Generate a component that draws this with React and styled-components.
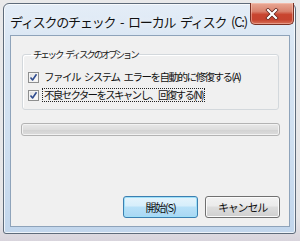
import React from "react";
import styled, { createGlobalStyle } from "styled-components";

const Global = createGlobalStyle`
  html, body { margin: 0; padding: 0; }
  body {
    width: 300px;
    height: 241px;
    overflow: hidden;
    background: linear-gradient(180deg, #e9e9ea 0%, #e6e6e8 90%, #d8d4dc 100%);
    font-family: "Noto Sans CJK JP", "Noto Sans", sans-serif;
  }
`;

const Desk = styled.div`
  padding: 3px 4px 0 3px;
  height: 241px;
  box-sizing: border-box;
`;

const Window = styled.div`
  position: relative;
  width: 293px;
  height: 231px;
  box-sizing: border-box;
  border: 1px solid #5e6b7a;
  border-radius: 6px 6px 3px 3px;
  background: linear-gradient(180deg, #e4edf7 0%, #d8e5f3 20%, #cfdff0 60%, #c2d6ec 100%);
  box-shadow: inset 0 0 0 1px rgba(255, 255, 255, 0.7);
  display: flex;
  flex-direction: column;
`;

const TitleBar = styled.div`
  height: 31px;
  display: flex;
  align-items: center;
  padding: 0 0 0 6px;
`;

const TitleText = styled.span`
  font-size: 13px;
  letter-spacing: -1.2px;
  word-spacing: 3px;
  color: #111;
  text-shadow: 0 0 6px rgba(255, 255, 255, 0.9);
  margin-top: 3px;
`;

const CloseButton = styled.div`
  position: absolute;
  top: -1px;
  right: 1px;
  width: 44px;
  height: 22px;
  box-sizing: border-box;
  border: 1px solid #7a3023;
  border-top: none;
  border-radius: 0 0 5px 5px;
  background: linear-gradient(180deg, #e9a995 0%, #d9826d 40%, #c8452f 55%, #c6442f 80%, #d6715a 100%);
  box-shadow: inset 0 0 0 1px rgba(255, 210, 200, 0.45);
  display: flex;
  align-items: center;
  justify-content: center;
`;

const Client = styled.div`
  flex: 1;
  margin: 0 5px 6px 6px;
  border: 1px solid #8ea3ba;
  background: #f0f0f0;
  display: flex;
  flex-direction: column;
`;

const Group = styled.fieldset`
  margin: 12px 10px 0 11px;
  padding: 9px 0 6px 5px;
  border: 1px solid #d3d8dc;
  border-radius: 3px;
  box-shadow: inset 1px 1px 0 #fff;
  min-width: 0;
`;

const Legend = styled.legend`
  margin-left: 3px;
  padding: 0 2px;
  font-size: 9.5px;
  line-height: 12px;
  letter-spacing: -2.2px;
  word-spacing: 3px;
  color: #1a1a1a;
`;

const Row = styled.label`
  display: flex;
  align-items: center;
  height: 16px;
  gap: 4px;
  & + & { margin-top: 2px; }
`;

const Box = styled.span`
  width: 11px;
  height: 11px;
  box-sizing: border-box;
  border: 1px solid #8e8f8f;
  background: linear-gradient(135deg, #dcdcdc 0%, #f4f4f4 60%, #ffffff 100%);
  box-shadow: inset 0 0 0 1px #f4f4f4;
  display: flex;
  align-items: center;
  justify-content: center;
  flex: none;
`;

const LabelText = styled.span`
  font-size: 10.5px;
  line-height: 12px;
  letter-spacing: ${(p) => (p.$focus ? "-1.7px" : "-1.5px")};
  word-spacing: 3px;
  color: #111;
  padding: 0 1px;
  border: 1px ${(p) => (p.$focus ? "dotted #222" : "solid transparent")};
  margin-left: -1px;
`;

const Progress = styled.div`
  margin: 13px 9px 0 10px;
  height: 13px;
  box-sizing: border-box;
  border: 1px solid #b3b3b3;
  border-radius: 3px;
  background: linear-gradient(180deg, #e8e8e8 0%, #dddddd 50%, #d2d2d2 51%, #dcdcdc 100%);
  box-shadow: inset 0 0 0 1px #f2f2f2;
`;

const Buttons = styled.div`
  margin: auto 9px 8px 0;
  display: flex;
  justify-content: flex-end;
  gap: 7px;
`;

const Button = styled.div`
  width: 75px;
  height: 22px;
  box-sizing: border-box;
  border: 1px solid ${(p) => (p.$primary ? "#3c7fb1" : "#707070")};
  border-radius: 3px;
  background: ${(p) =>
    p.$primary
      ? "linear-gradient(180deg, #e5f4fc 0%, #d6eefb 45%, #b8e1f8 50%, #a9d7f3 100%)"
      : "linear-gradient(180deg, #f2f2f2 0%, #ebebeb 45%, #dddddd 50%, #cfcfcf 100%)"};
  box-shadow: inset 0 0 0 1px ${(p) => (p.$primary ? "#9fe0f8" : "#fbfbfb")};
  display: flex;
  align-items: center;
  justify-content: center;
  font-size: 11px;
  letter-spacing: -1.2px;
  color: #111;
`;

const Check = () => (
  <svg width="9" height="9" viewBox="0 0 9 9">
    <path d="M1.5 4.5 L3.6 7 L7.5 1.2" fill="none" stroke="#2f4c8f" strokeWidth="1.6" strokeLinejoin="round" />
  </svg>
);

const CloseX = () => (
  <svg width="14" height="12" viewBox="0 0 14 12">
    <path d="M3 2 L11 10 M11 2 L3 10" stroke="#5a2018" strokeWidth="3.6" strokeLinecap="square" />
    <path d="M3 2 L11 10 M11 2 L3 10" stroke="#ffffff" strokeWidth="2.2" strokeLinecap="square" />
  </svg>
);

export default function App() {
  return (
    <>
      <Global />
      <Desk>
        <Window>
          <TitleBar>
            <TitleText>ディスクのチェック - ローカル ディスク (C:)</TitleText>
          </TitleBar>
          <CloseButton>
            <CloseX />
          </CloseButton>
          <Client>
            <Group>
              <Legend>チェック ディスクのオプション</Legend>
              <Row>
                <Box><Check /></Box>
                <LabelText>ファイル システム エラーを自動的に修復する(A)</LabelText>
              </Row>
              <Row>
                <Box><Check /></Box>
                <LabelText $focus>不良セクターをスキャンし、回復する(N)</LabelText>
              </Row>
            </Group>
            <Progress />
            <Buttons>
              <Button $primary>開始(S)</Button>
              <Button>キャンセル</Button>
            </Buttons>
          </Client>
        </Window>
      </Desk>
    </>
  );
}
